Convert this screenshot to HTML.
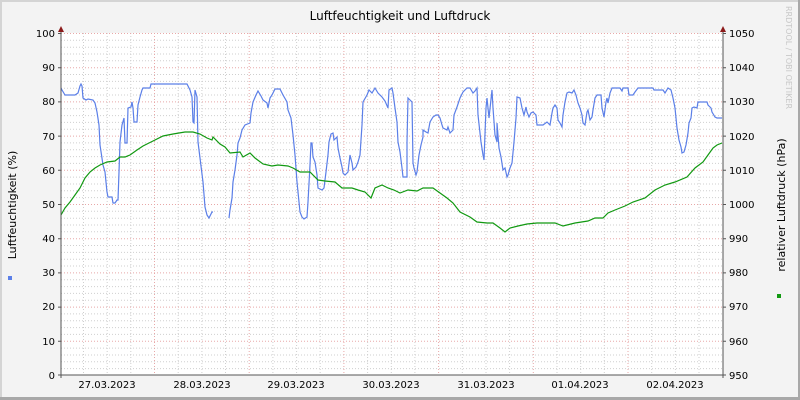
<!DOCTYPE html>
<html><head><meta charset="utf-8"><style>
html,body{margin:0;padding:0;width:800px;height:400px;overflow:hidden;background:#f3f3f3}
svg{display:block;font-family:"DejaVu Sans","Liberation Sans",sans-serif}
</style></head><body>
<svg width="800" height="400" xmlns="http://www.w3.org/2000/svg">
<rect x="0" y="0" width="800" height="400" fill="#f3f3f3"/>
<rect x="0" y="0" width="800" height="2" fill="#d4d4d4"/>
<rect x="0" y="0" width="2" height="400" fill="#d4d4d4"/>
<rect x="798" y="0" width="2" height="400" fill="#a8a8a8"/>
<rect x="0" y="397" width="800" height="3" fill="#a8a8a8"/>
<rect x="61" y="33" width="662" height="342" fill="#fff"/>
<g stroke="#cfcfcf" stroke-width="1" stroke-dasharray="1,2">
<path d="M61 40.3H723M61 47.2H723M61 54.0H723M61 60.8H723M61 74.5H723M61 81.4H723M61 88.2H723M61 95.0H723M61 108.7H723M61 115.6H723M61 122.4H723M61 129.2H723M61 142.9H723M61 149.8H723M61 156.6H723M61 163.4H723M61 177.1H723M61 184.0H723M61 190.8H723M61 197.6H723M61 211.3H723M61 218.2H723M61 225.0H723M61 231.8H723M61 245.5H723M61 252.4H723M61 259.2H723M61 266.0H723M61 279.7H723M61 286.6H723M61 293.4H723M61 300.2H723M61 313.9H723M61 320.8H723M61 327.6H723M61 334.4H723M61 348.1H723M61 355.0H723M61 361.8H723M61 368.6H723"/>
<path d="M83.5 33V375M107.2 33V375M130.8 33V375M178.2 33V375M201.9 33V375M225.5 33V375M272.9 33V375M296.6 33V375M320.2 33V375M367.6 33V375M391.3 33V375M414.9 33V375M462.3 33V375M486 33V375M509.6 33V375M557 33V375M580.7 33V375M604.3 33V375M651.7 33V375M675.4 33V375M699 33V375"/>
</g>
<g stroke="#e8a8a8" stroke-width="1" stroke-dasharray="1,2">
<path d="M61 33.5H723M61 67.7H723M61 101.9H723M61 136.1H723M61 170.3H723M61 204.5H723M61 238.7H723M61 272.9H723M61 307.1H723M61 341.3H723"/>
<path d="M154.5 33V375M249.2 33V375M343.9 33V375M438.6 33V375M533.3 33V375M628 33V375"/>
</g>
<polyline fill="none" stroke="#5b7fe8" stroke-width="1.2" points="61,88 62,90 65,95 75,95 78,93 80,86 81,84 82,86 83,98 86,100 88,99 93,100 95,103 97,112 99,125 100,145 103,165 105,172 107,192 108,197 112,197 113,203 115,203 117,200 118,200 119,172 120,142 122,125 124,118 125,143 127,143 128,108 131,107 132,102 133,108 134,122 137,122 138,105 140,97 142,90 143,88 150,88 151,84 187,84 190,90 192,97 193,122 194,123 195,90 197,97 198,142 200,158 203,182 205,207 207,215 209,218 212,212 213,212"/>
<polyline fill="none" stroke="#5b7fe8" stroke-width="1.2" points="229,218 230,210 232,198 233,182 235,170 237,155 238,143 240,138 242,130 245,125 250,123 251,113 253,102 256,95 258,91 261,96 263,100 267,103 268,108 270,98 272,95 275,89 280,89 283,95 287,102 288,110 291,118 293,135 295,155 297,182 298,192 300,212 302,217 304,219 307,217 308,202 310,165 311,143 312,143 313,157 315,162 317,175 318,188 322,190 324,188 326,172 328,155 329,142 331,134 333,133 334,140 337,137 338,148 340,158 342,167 343,173 345,175 348,172 350,155 352,163 353,170 356,167 358,162 360,155 362,125 363,102 367,95 369,90 372,93 375,88 378,93 382,97 385,101 388,108 389,90 392,88 393,93 395,108 397,122 398,142 400,152 402,168 403,177 407,177 407,142 408,98 412,102 413,163 414,168 416,175 417,172 419,155 421,145 423,137 423,130 426,132 428,133 430,122 433,117 436,115 438,115 440,118 442,125 443,128 447,130 448,127 450,133 453,130 454,115 457,107 460,98 463,92 467,88 470,88 473,93 475,91 477,88 478,115 481,142 483,155 484,160 486,108 487,98 489,118 492,90 493,108 495,135 497,142 497,123 499,148 501,157 503,170 505,168 507,177 508,175 510,168 512,163 514,142 516,118 517,97 520,98 522,108 524,115 526,107 527,112 529,117 531,113 533,112 536,115 537,125 543,125 547,122 550,125 552,113 553,108 555,105 557,108 558,120 560,123 562,127 563,115 565,102 567,93 569,92 572,93 574,90 576,95 578,103 580,108 582,115 583,123 585,125 587,112 588,110 590,120 592,117 593,110 595,98 597,95 601,95 602,108 604,117 606,102 607,98 608,103 610,93 612,88 620,88 622,91 623,88 628,88 629,95 633,95 635,92 638,88 653,88 654,90 663,90 665,93 668,88 671,90 673,98 675,108 677,128 679,140 681,147 682,153 684,152 686,145 688,133 689,123 691,118 692,108 694,107 697,108 698,102 707,102 708,105 711,108 712,112 715,117 717,118 722,118"/>
<polyline fill="none" stroke="#119911" stroke-width="1.2" points="61,215 65,208 70,202 75,195 80,188 85,178 90,172 95,168 100,165 107,162 115,161 120,157 125,157 130,155 137,150 143,146 153,141 163,136 173,134 185,132 193,132 200,134 207,138 212,140 213,137 220,144 225,147 230,153 240,152 243,157 250,153 255,158 263,164 272,166 278,165 288,166 293,168 300,172 310,172 318,180 325,181 335,182 342,188 352,188 358,190 365,192 371,198 375,188 382,185 388,188 394,190 400,193 408,190 417,191 423,188 433,188 440,193 447,198 453,203 460,212 470,217 477,222 487,223 493,223 500,228 505,232 510,228 518,226 527,224 537,223 550,223 555,223 563,226 575,223 588,221 595,218 603,218 608,213 615,210 625,206 633,202 645,198 655,190 665,185 675,182 687,177 695,168 703,162 708,155 713,148 717,145 722,143"/>
<g stroke="#555" stroke-width="1">
<path d="M61 30V378M58 375H726M723 30V378"/>
<path d="M58 33.5H61M58 67.7H61M58 101.9H61M58 136.1H61M58 170.3H61M58 204.5H61M58 238.7H61M58 272.9H61M58 307.1H61M58 341.3H61M723 33.5H726M723 67.7H726M723 101.9H726M723 136.1H726M723 170.3H726M723 204.5H726M723 238.7H726M723 272.9H726M723 307.1H726M723 341.3H726M723 375H726"/>
</g>
<path d="M58 32L61 26L64 32Z M720 32L723 26L726 32Z" fill="#8b1a1a"/>
<g font-size="10" fill="#000" text-anchor="end">
<text x="55" y="37">100</text><text x="55" y="71">90</text><text x="55" y="105">80</text><text x="55" y="140">70</text><text x="55" y="174">60</text><text x="55" y="208">50</text><text x="55" y="242">40</text><text x="55" y="276">30</text><text x="55" y="310">20</text><text x="55" y="345">10</text><text x="55" y="379">0</text>
</g>
<g font-size="10" fill="#000">
<text x="729" y="37">1050</text><text x="729" y="71">1040</text><text x="729" y="105">1030</text><text x="729" y="140">1020</text><text x="729" y="174">1010</text><text x="729" y="208">1000</text><text x="729" y="242">990</text><text x="729" y="276">980</text><text x="729" y="310">970</text><text x="729" y="345">960</text><text x="729" y="379">950</text>
</g>
<g font-size="10" fill="#000" text-anchor="middle">
<text x="107" y="388">27.03.2023</text><text x="202" y="388">28.03.2023</text><text x="296" y="388">29.03.2023</text><text x="391" y="388">30.03.2023</text><text x="486" y="388">31.03.2023</text><text x="580" y="388">01.04.2023</text><text x="675" y="388">02.04.2023</text>
</g>
<text x="400" y="20" font-size="12" text-anchor="middle" fill="#000">Luftfeuchtigkeit und Luftdruck</text>
<text transform="translate(16,205) rotate(-90)" font-size="11" text-anchor="middle" fill="#000">Luftfeuchtigkeit (%)</text>
<text transform="translate(785,205) rotate(-90)" font-size="11" text-anchor="middle" fill="#000">relativer Luftdruck (hPa)</text>
<text transform="translate(786,6) rotate(90)" font-size="8" fill="#c8c8c8">RRDTOOL / TOBI OETIKER</text>
<rect x="8" y="276" width="4" height="4" fill="#5b7fe8"/>
<rect x="777" y="294" width="4" height="4" fill="#119911"/>
</svg>
</body></html>
